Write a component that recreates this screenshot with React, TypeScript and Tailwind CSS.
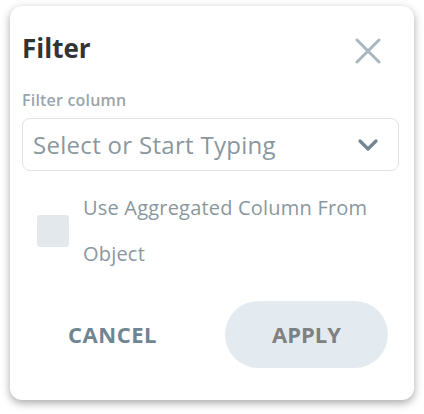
import React from "react";

export default function App() {
  return (
    <div className="w-[424px] h-[414px] bg-white" style={{ fontFamily: '"Open Sans", "Noto Sans", sans-serif' }}>
      <div className="pt-[6px] pl-[10px]">
        <div className="w-[404px] h-[394px] bg-white rounded-[12px] shadow-[0_3px_8px_rgba(0,0,0,0.35)] px-[12px] pt-[20px]">
          <div className="flex items-center justify-between h-[44px]">
            <div className="text-[26px] font-bold text-[#333333] leading-none">Filter</div>
            <svg width="26" height="26" viewBox="0 0 26 26" className="mr-[21px] mt-[6px]">
              <path d="M2 2 L24 24 M24 2 L2 24" stroke="#a9b8bf" strokeWidth="3" strokeLinecap="round" />
            </svg>
          </div>
          <div className="mt-[22px] text-[16px] font-semibold text-[#9aa5ab] leading-none tracking-[0.2px]">Filter column</div>
          <div className="mt-[10px] mr-[3px] h-[53px] border border-[#dfe4e7] rounded-[8px] flex items-center justify-between pl-[10px] pr-[19px]">
            <span className="text-[24px] tracking-[0.3px] text-[#8a979e]">Select or Start Typing</span>
            <svg width="22" height="14" viewBox="0 0 22 14">
              <path d="M3 3 L11 11 L19 3" stroke="#6f8591" strokeWidth="3.2" fill="none" strokeLinecap="round" strokeLinejoin="round" />
            </svg>
          </div>
          <div className="mt-[14px] flex items-center">
            <div className="ml-[15px] w-[32px] h-[32px] bg-[#e2e8ec] rounded-[3px] shrink-0" />
            <div className="ml-[14px] text-[20px] leading-[46px] tracking-[0.2px] text-[#8a979e]">Use Aggregated Column From Object</div>
          </div>
          <div className="mt-[24px] flex items-center">
            <div className="w-[203px] flex justify-center pr-[22px]">
              <span className="text-[22px] font-bold tracking-[0.5px] text-[#6f8591]">CANCEL</span>
            </div>
            <div className="w-[163px] h-[67px] rounded-full bg-[#e4ebf0] flex items-center justify-center">
              <span className="text-[22px] font-bold text-[#808080]">APPLY</span>
            </div>
          </div>
        </div>
      </div>
    </div>
  );
}
